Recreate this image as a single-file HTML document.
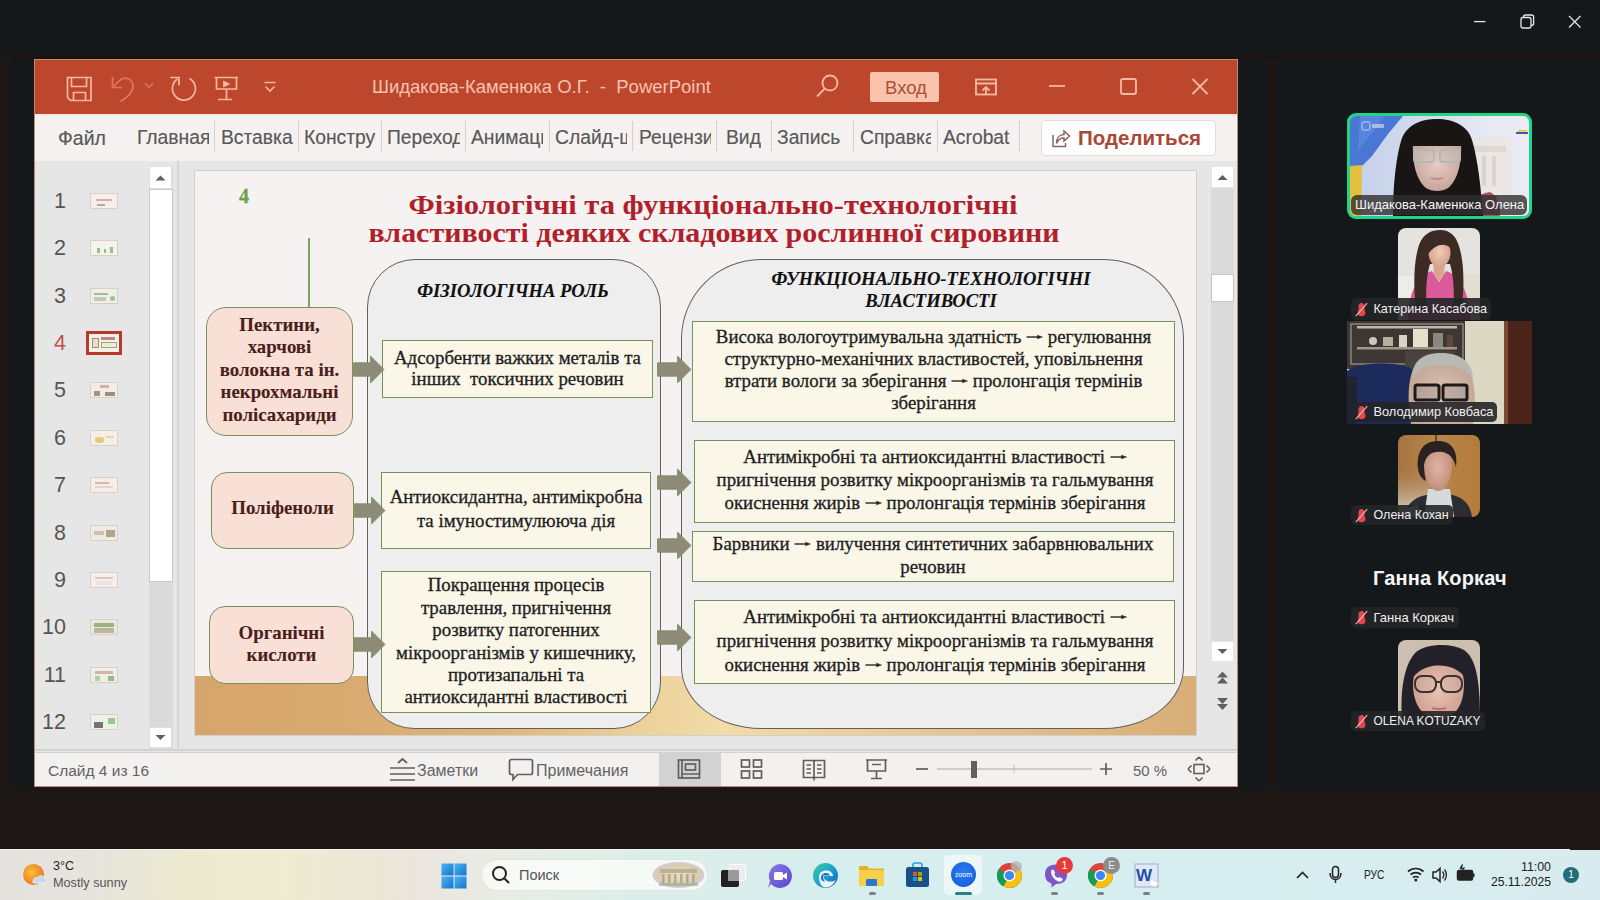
<!DOCTYPE html>
<html><head><meta charset="utf-8">
<style>
*{margin:0;padding:0;box-sizing:border-box}
html,body{width:1600px;height:900px;overflow:hidden;background:#15181b;font-family:"Liberation Sans",sans-serif}
body{position:relative}
.a{position:absolute}
.ser{font-family:"Liberation Serif",serif;-webkit-text-stroke:0.3px currentColor}
.tab{top:126px;height:24px;font-size:19.3px;color:#585858;white-space:nowrap;overflow:hidden;line-height:24px;-webkit-text-stroke:0.15px #585858}
.sep{top:121px;width:1px;height:30px;background:#d3d1d0}
.stxt{font-size:16px;color:#636363;white-space:nowrap;line-height:20px}
.num{left:26px;width:40px;text-align:right;font-size:21.5px;color:#555;line-height:24px}
.th{left:90px;width:28px;height:16px;background:#f4efe9;border:1px solid #d8cfc8}
.th i{opacity:.6}
</style></head><body>
<!-- subtle bands -->
<div class="a" style="left:0;top:51px;width:1600px;height:8px;background:linear-gradient(#15181b,#171613 60%,#1c100c)"></div>
<div class="a" style="left:1267px;top:59px;width:10px;height:728px;background:#1a1716"></div>
<div class="a" style="left:0;top:787px;width:1600px;height:62px;background:#1c1715"></div>
<div class="a" style="left:1238px;top:787px;width:362px;height:2px;background:#15181b"></div>
<div class="a" style="left:0;top:52px;width:11px;height:736px;background:#1b1715"></div>

<!-- window frame -->
<div class="a" style="left:34px;top:59px;width:1204px;height:728px;background:#e6e6e6;border:1px solid #b88a7c"></div>
<!-- title bar -->
<div class="a" style="left:35px;top:60px;width:1202px;height:54px;background:#bc472d"></div>
<!-- tabs bar -->
<div class="a" style="left:35px;top:114px;width:1202px;height:47px;background:#f4f1f0;border-top:2px solid #faeae8"></div>
<!-- status bar -->
<div class="a" style="left:35px;top:749px;width:1202px;height:1.5px;background:#d2d1d1"></div>
<div class="a" style="left:35px;top:752px;width:1202px;height:34px;background:#f3f1f0;border-top:1.5px solid #d2d0d0"></div>


<!-- title bar icons -->
<svg class="a" style="left:60px;top:70px" width="230" height="40" viewBox="60 70 230 40" fill="none" stroke="#f8b7a0" stroke-width="1.7">
  <path d="M67.5 77.5 H91 V100.5 H70.5 L67.5 97.5 Z"/>
  <path d="M71.5 77.5 V86.5 H86.5 V77.5"/>
  <path d="M73.5 100.5 V92.5 H85.5 V100.5"/>
  <g stroke="#e2765c"><path d="M112.5 77 V87.5 H122"/><path d="M112.5 87.5 L119 81 C124 76 133 78 133 86.5 C133 93 127 97 120.5 101.5"/></g>
  <path d="M145 83 L149 87.5 L153 83" stroke-width="1.4" stroke="#e2765c"/>
  <path d="M177.5 79 A11.5 11.5 0 1 0 189.5 78.5"/>
  <path d="M170.5 77.5 H179 V85.5"/>
  <path d="M214.5 77.5 H238 M216.5 77.5 V89 H236.5 V77.5 M226.5 89 V99 M218 99.5 H232"/>
  <path d="M223.5 81 L229.5 84 L223.5 87 Z" fill="#f8b7a0" stroke-width="0.8"/>
  <path d="M264.5 82.5 H275.5 M265.5 86.5 L270 91 L274.5 86.5" stroke-width="1.6"/>
</svg>
<div class="a" style="left:372px;top:75.5px;font-size:18.5px;color:#f8c2ae;white-space:nowrap;line-height:22px">Шидакова-Каменюка О.Г. &nbsp;- &nbsp;PowerPoint</div>
<svg class="a" style="left:800px;top:65px" width="420" height="45" viewBox="800 65 420 45" fill="none" stroke="#f6b9a3" stroke-width="1.8">
  <circle cx="830" cy="83" r="7.5"/><path d="M824.8 88.5 L817 96.5"/>
  <rect x="976" y="79.5" width="20" height="15"/><path d="M976 83.5 H996 M986 94 V87.5 M982.5 90.5 L986 87 L989.5 90.5"/>
  <path d="M1049 86 H1065"/>
  <rect x="1121" y="79" width="15" height="15" rx="2"/>
  <path d="M1192.5 79 L1207.5 94 M1207.5 79 L1192.5 94"/>
</svg>
<div class="a" style="left:870px;top:72px;width:69px;height:30px;background:#fac3ab;border-radius:2px"></div>
<div class="a" style="left:885px;top:76.5px;font-size:18.5px;color:#a9503c;line-height:22px">Вход</div>

<!-- tabs -->
<div class="a tab" style="left:58px;font-size:19.5px">Файл</div>
<div class="a tab" style="left:137px;width:72px">Главная</div>
<div class="a sep" style="left:214px"></div>
<div class="a tab" style="left:221px;width:73px">Вставка</div>
<div class="a sep" style="left:298px"></div>
<div class="a tab" style="left:304px;width:72px">Конструктор</div>
<div class="a sep" style="left:381px"></div>
<div class="a tab" style="left:387px;width:73px">Переходы</div>
<div class="a sep" style="left:465px"></div>
<div class="a tab" style="left:471px;width:72px">Анимация</div>
<div class="a sep" style="left:549px"></div>
<div class="a tab" style="left:555px;width:72px">Слайд-шоу</div>
<div class="a sep" style="left:632px"></div>
<div class="a tab" style="left:639px;width:72px">Рецензирование</div>
<div class="a sep" style="left:716px"></div>
<div class="a tab" style="left:726px">Вид</div>
<div class="a sep" style="left:771px"></div>
<div class="a tab" style="left:777px">Запись</div>
<div class="a sep" style="left:853px"></div>
<div class="a tab" style="left:860px;width:71px">Справка</div>
<div class="a sep" style="left:937px"></div>
<div class="a tab" style="left:943px;width:72px">Acrobat</div>
<div class="a sep" style="left:1019px"></div>
<div class="a" style="left:1041px;top:120px;width:175px;height:36px;background:#fff;border:1px solid #e2dedc;border-radius:4px"></div>
<svg class="a" style="left:1048px;top:124px" width="26" height="28" viewBox="0 0 26 28" fill="none" stroke="#8a6660" stroke-width="1.5">
  <path d="M5 11 V22.5 H17.5 V19"/><path d="M8.5 19.5 C8.5 14 11.5 10.5 16 10.5 V7 L21.5 12 L16 17 V14 C12.5 14 10 16 8.5 19.5 Z"/>
</svg>
<div class="a" style="left:1078px;top:126px;font-size:20.5px;font-weight:bold;color:#ab4735;line-height:24px;white-space:nowrap">Поделиться</div>

<div class="a num" style="top:188.8px;color:#555">1</div>
<div class="a th" style="top:192.8px;background:linear-gradient(#f6eeea,#f6eeea)"><i style="position:absolute;left:5px;top:5px;width:16px;height:2px;background:#c9847a"></i><i style="position:absolute;left:6px;top:10px;width:8px;height:2px;background:#8c7a6a"></i></div>
<div class="a num" style="top:236.2px;color:#555">2</div>
<div class="a th" style="top:240.2px;background:linear-gradient(#f5f2ea,#f5f2ea)"><i style="position:absolute;left:6px;top:7px;width:3px;height:5px;background:#5aa048"></i><i style="position:absolute;left:13px;top:8px;width:2px;height:4px;background:#5aa048"></i><i style="position:absolute;left:19px;top:6px;width:3px;height:6px;background:#5aa048"></i></div>
<div class="a num" style="top:283.6px;color:#555">3</div>
<div class="a th" style="top:287.6px;background:linear-gradient(#eef0e6,#eef0e6)"><i style="position:absolute;left:3px;top:4px;width:14px;height:2px;background:#8b8b7a"></i><i style="position:absolute;left:3px;top:8px;width:12px;height:4px;background:#9fb48e"></i><i style="position:absolute;left:19px;top:7px;width:5px;height:5px;background:#5ab04a;border-radius:50%"></i></div>
<div class="a num" style="top:331.0px;color:#c0504d">4</div>
<div class="a" style="left:86px;top:331px;width:36px;height:24px;border:3px solid #b83b2a;background:#f4f0e8"><i style="position:absolute;left:3px;top:4px;width:7px;height:10px;background:#f3d8cc;border:1px solid #8a9a6a"></i><i style="position:absolute;left:12px;top:3px;width:14px;height:3px;background:#b88"></i><i style="position:absolute;left:12px;top:8px;width:16px;height:6px;background:#f0ead8;border:1px solid #9aa87a"></i></div>
<div class="a num" style="top:378.4px;color:#555">5</div>
<div class="a th" style="top:382.4px;background:linear-gradient(#f2eee6,#f2eee6)"><i style="position:absolute;left:9px;top:2px;width:9px;height:3px;background:#c08080"></i><i style="position:absolute;left:3px;top:8px;width:6px;height:5px;background:#6a5a4a"></i><i style="position:absolute;left:14px;top:9px;width:10px;height:4px;background:#5a5040"></i></div>
<div class="a num" style="top:425.8px;color:#555">6</div>
<div class="a th" style="top:429.8px;background:linear-gradient(#f6f0e4,#f6f0e4)"><i style="position:absolute;left:4px;top:6px;width:9px;height:6px;background:#d8b03a;border-radius:40%"></i><i style="position:absolute;left:15px;top:5px;width:8px;height:2px;background:#c9c3b8"></i></div>
<div class="a num" style="top:473.2px;color:#555">7</div>
<div class="a th" style="top:477.2px;background:linear-gradient(#f6ede8,#f6ede8)"><i style="position:absolute;left:4px;top:4px;width:14px;height:2px;background:#d08a8a"></i><i style="position:absolute;left:4px;top:8px;width:18px;height:2px;background:#cfc8c0"></i></div>
<div class="a num" style="top:520.6px;color:#555">8</div>
<div class="a th" style="top:524.6px;background:linear-gradient(#eeeae4,#eeeae4)"><i style="position:absolute;left:3px;top:5px;width:10px;height:4px;background:#b0a89a"></i><i style="position:absolute;left:15px;top:4px;width:9px;height:7px;background:#8a7050"></i></div>
<div class="a num" style="top:568.0px;color:#555">9</div>
<div class="a th" style="top:572.0px;background:linear-gradient(#f6eeea,#f6eeea)"><i style="position:absolute;left:4px;top:4px;width:18px;height:2px;background:#d3a8a8"></i><i style="position:absolute;left:5px;top:8px;width:16px;height:4px;background:#e6dcd8"></i></div>
<div class="a num" style="top:615.4px;color:#555">10</div>
<div class="a th" style="top:619.4px;background:linear-gradient(#e8eadc,#e8eadc)"><i style="position:absolute;left:3px;top:3px;width:20px;height:4px;background:#6a8a4a"></i><i style="position:absolute;left:3px;top:8px;width:20px;height:5px;background:#a09070"></i></div>
<div class="a num" style="top:662.8px;color:#555">11</div>
<div class="a th" style="top:666.8px;background:linear-gradient(#eef0e4,#eef0e4)"><i style="position:absolute;left:4px;top:3px;width:18px;height:3px;background:#c08a8a"></i><i style="position:absolute;left:4px;top:8px;width:5px;height:5px;background:#90b080"></i><i style="position:absolute;left:17px;top:8px;width:6px;height:5px;background:#5a9a5a"></i></div>
<div class="a num" style="top:710.2px;color:#555">12</div>
<div class="a th" style="top:714.2px;background:linear-gradient(#eef0ea,#eef0ea)"><i style="position:absolute;left:3px;top:7px;width:9px;height:6px;background:#222"></i><i style="position:absolute;left:17px;top:3px;width:7px;height:6px;background:#5ab04a"></i></div>
<!-- left panel scrollbar -->
<div class="a" style="left:149px;top:166px;width:24px;height:583px;background:#dadada"></div>
<div class="a" style="left:149px;top:166px;width:23px;height:23px;background:#fff;border:1px solid #e0e0e0"></div>
<svg class="a" style="left:149px;top:166px" width="23" height="23"><path d="M6.5 14.5 L11.5 9.5 L16.5 14.5 Z" fill="#606060"/></svg>
<div class="a" style="left:149px;top:189px;width:24px;height:393px;background:#fff;border:1px solid #c8c8c8"></div>
<div class="a" style="left:149px;top:727px;width:23px;height:21px;background:#fff;border:1px solid #e0e0e0"></div>
<svg class="a" style="left:149px;top:727px" width="23" height="21"><path d="M6.5 8 L11.5 13 L16.5 8 Z" fill="#606060"/></svg>
<div class="a" style="left:177px;top:161px;width:2px;height:587px;background:#d6d6d6"></div>
<!-- slide shadow + slide -->
<div class="a" style="left:194px;top:170px;width:1003px;height:566px;background:#d0d0d0"></div>
<div id="slide" class="a" style="left:195px;top:171px;width:1001px;height:564px;background:#f5f2f1;overflow:hidden"></div>
<!--SLIDE-->
<div class="a" style="left:195px;top:676px;width:1001px;height:59px;background:linear-gradient(90deg,#d5a56b 0%,#d9aa70 15%,#dfb47a 30%,#edd29a 45%,#f2dcaa 53%,#e9ca98 70%,#dfb882 88%,#d9ae78 100%)"></div>
<div class="a ser" style="left:239px;top:184px;font-size:20px;font-weight:bold;color:#6aa24c;line-height:24px">4</div>
<div class="a ser" style="left:263.0px;top:189.7px;width:900px;font-size:27px;line-height:30px;color:#b01f2c;text-align:center;white-space:nowrap;font-weight:bold;-webkit-text-stroke:0.1px currentColor;transform:scaleX(1.13);-webkit-text-stroke:0;">Фізіологічні та функціонально-технологічні</div>
<div class="a ser" style="left:264.0px;top:217.9px;width:900px;font-size:27px;line-height:30px;color:#b01f2c;text-align:center;white-space:nowrap;font-weight:bold;-webkit-text-stroke:0.1px currentColor;transform:scaleX(1.11);-webkit-text-stroke:0;">властивості деяких складових рослинної сировини</div>
<div class="a" style="left:308px;top:238px;width:2px;height:70px;background:#7aa65a"></div>
<div class="a" style="left:367px;top:259px;width:294px;height:470px;background:#efeeef;border:1.8px solid #625f58;border-radius:48px 48px 47px 47px"></div>
<div class="a" style="left:681px;top:259px;width:503px;height:470px;background:#efeeef;border:1.8px solid #625f58;border-radius:80px 80px 80px 80px / 80px 80px 62px 62px"></div>
<div class="a ser" style="left:213.0px;top:279.5px;width:600px;font-size:18.6px;line-height:22.4px;color:#111;text-align:center;white-space:nowrap;font-weight:bold;-webkit-text-stroke:0.1px currentColor;font-style:italic;">ФІЗІОЛОГІЧНА РОЛЬ</div>
<div class="a ser" style="left:631.0px;top:267.9px;width:600px;font-size:18.6px;line-height:22.3px;color:#111;text-align:center;white-space:nowrap;font-weight:bold;-webkit-text-stroke:0.1px currentColor;font-style:italic;">ФУНКЦІОНАЛЬНО-ТЕХНОЛОГІЧНІ<br>ВЛАСТИВОСТІ</div>
<div class="a" style="left:206px;top:307px;width:147px;height:129px;background:#f8e0d6;border:1.8px solid #77915a;border-radius:20px"></div>
<div class="a" style="left:211px;top:472px;width:143px;height:77px;background:#f8e0d6;border:1.8px solid #77915a;border-radius:16px"></div>
<div class="a" style="left:209px;top:606px;width:145px;height:78px;background:#f8e0d6;border:1.8px solid #77915a;border-radius:16px"></div>
<div class="a ser" style="left:-20.5px;top:313.9px;width:600px;font-size:18.85px;line-height:22.5px;color:#4a1e1b;text-align:center;white-space:nowrap;font-weight:bold;-webkit-text-stroke:0.1px currentColor;">Пектини,<br>харчові<br>волокна та ін.<br>некрохмальні<br>полісахариди</div>
<div class="a ser" style="left:-17.5px;top:496.9px;width:600px;font-size:18.85px;line-height:22.4px;color:#4a1e1b;text-align:center;white-space:nowrap;font-weight:bold;-webkit-text-stroke:0.1px currentColor;">Поліфеноли</div>
<div class="a ser" style="left:-18.5px;top:622.0px;width:600px;font-size:18.85px;line-height:22.1px;color:#4a1e1b;text-align:center;white-space:nowrap;font-weight:bold;-webkit-text-stroke:0.1px currentColor;">Органічні<br>кислоти</div>
<div class="a" style="left:382px;top:340px;width:271px;height:58px;background:#faf6e8;border:1.8px solid #77915a;border-radius:0px"></div>
<div class="a" style="left:381px;top:472px;width:270px;height:77px;background:#faf6e8;border:1.8px solid #77915a;border-radius:0px"></div>
<div class="a" style="left:381px;top:571px;width:270px;height:142px;background:#faf6e8;border:1.8px solid #77915a;border-radius:0px"></div>
<div class="a ser" style="left:217.5px;top:346.5px;width:600px;font-size:18.85px;line-height:21.9px;color:#1e1e1e;text-align:center;white-space:nowrap;">Адсорбенти важких металів та<br>інших &nbsp;токсичних речовин</div>
<div class="a ser" style="left:216.0px;top:485.0px;width:600px;font-size:18.85px;line-height:24.3px;color:#1e1e1e;text-align:center;white-space:nowrap;">Антиоксидантна, антимікробна<br>та імуностимулююча дія</div>
<div class="a ser" style="left:216.0px;top:574.4px;width:600px;font-size:18.85px;line-height:22.4px;color:#1e1e1e;text-align:center;white-space:nowrap;">Покращення процесів<br>травлення, пригнічення<br>розвитку патогенних<br>мікроорганізмів у кишечнику,<br>протизапальні та<br>антиоксидантні властивості</div>
<div class="a" style="left:692px;top:321px;width:483px;height:101px;background:#faf6e8;border:1.8px solid #77915a;border-radius:0px"></div>
<div class="a" style="left:694px;top:440px;width:481px;height:83px;background:#faf6e8;border:1.8px solid #77915a;border-radius:0px"></div>
<div class="a" style="left:692px;top:531px;width:482px;height:51px;background:#faf6e8;border:1.8px solid #77915a;border-radius:0px"></div>
<div class="a" style="left:694px;top:600px;width:481px;height:84px;background:#faf6e8;border:1.8px solid #77915a;border-radius:0px"></div>
<div class="a ser" style="left:633.5px;top:325.8px;width:600px;font-size:18.85px;line-height:22.2px;color:#1e1e1e;text-align:center;white-space:nowrap;">Висока вологоутримувальна здатність <svg width="17" height="8" style="vertical-align:1.8px" fill="none" stroke="#262626"><path d="M0.5 4 H14" stroke-width="1.4"/><path d="M11.5 2.2 L16.5 4 L11.5 5.8 Z" fill="#262626" stroke-width="0.5"/></svg> регулювання<br>структурно-механічних властивостей, уповільнення<br>втрати вологи за зберігання <svg width="17" height="8" style="vertical-align:1.8px" fill="none" stroke="#262626"><path d="M0.5 4 H14" stroke-width="1.4"/><path d="M11.5 2.2 L16.5 4 L11.5 5.8 Z" fill="#262626" stroke-width="0.5"/></svg> пролонгація термінів<br>зберігання</div>
<div class="a ser" style="left:635.0px;top:446.2px;width:600px;font-size:18.85px;line-height:22.8px;color:#1e1e1e;text-align:center;white-space:nowrap;">Антимікробні та антиоксидантні властивості <svg width="17" height="8" style="vertical-align:1.8px" fill="none" stroke="#262626"><path d="M0.5 4 H14" stroke-width="1.4"/><path d="M11.5 2.2 L16.5 4 L11.5 5.8 Z" fill="#262626" stroke-width="0.5"/></svg><br>пригнічення розвитку мікроорганізмів та гальмування<br>окиснення жирів <svg width="17" height="8" style="vertical-align:1.8px" fill="none" stroke="#262626"><path d="M0.5 4 H14" stroke-width="1.4"/><path d="M11.5 2.2 L16.5 4 L11.5 5.8 Z" fill="#262626" stroke-width="0.5"/></svg> пролонгація термінів зберігання</div>
<div class="a ser" style="left:633.0px;top:533.2px;width:600px;font-size:18.85px;line-height:22.4px;color:#1e1e1e;text-align:center;white-space:nowrap;">Барвники <svg width="17" height="8" style="vertical-align:1.8px" fill="none" stroke="#262626"><path d="M0.5 4 H14" stroke-width="1.4"/><path d="M11.5 2.2 L16.5 4 L11.5 5.8 Z" fill="#262626" stroke-width="0.5"/></svg> вилучення синтетичних забарвнювальних<br>речовин</div>
<div class="a ser" style="left:635.0px;top:604.6px;width:600px;font-size:18.85px;line-height:24.2px;color:#1e1e1e;text-align:center;white-space:nowrap;">Антимікробні та антиоксидантні властивості <svg width="17" height="8" style="vertical-align:1.8px" fill="none" stroke="#262626"><path d="M0.5 4 H14" stroke-width="1.4"/><path d="M11.5 2.2 L16.5 4 L11.5 5.8 Z" fill="#262626" stroke-width="0.5"/></svg><br>пригнічення розвитку мікроорганізмів та гальмування<br>окиснення жирів <svg width="17" height="8" style="vertical-align:1.8px" fill="none" stroke="#262626"><path d="M0.5 4 H14" stroke-width="1.4"/><path d="M11.5 2.2 L16.5 4 L11.5 5.8 Z" fill="#262626" stroke-width="0.5"/></svg> пролонгація термінів зберігання</div>
<svg class="a" style="left:353px;top:354.8px" width="32" height="29"><path d="M0.5 7.75 H17.5 V1 L31 14.5 L17.5 28 V21.25 H0.5 Z" fill="#8d8a77" stroke="#76905a" stroke-width="0.8"/></svg>
<svg class="a" style="left:354px;top:495.5px" width="32" height="29"><path d="M0.5 7.75 H17.5 V1 L31 14.5 L17.5 28 V21.25 H0.5 Z" fill="#8d8a77" stroke="#76905a" stroke-width="0.8"/></svg>
<svg class="a" style="left:353px;top:629.5px" width="33" height="29"><path d="M0.5 7.75 H18.5 V1 L32 14.5 L18.5 28 V21.25 H0.5 Z" fill="#8d8a77" stroke="#76905a" stroke-width="0.8"/></svg>
<svg class="a" style="left:657px;top:354.5px" width="35" height="29"><path d="M0.5 7.75 H20.5 V1 L34 14.5 L20.5 28 V21.25 H0.5 Z" fill="#8d8a77" stroke="#76905a" stroke-width="0.8"/></svg>
<svg class="a" style="left:657px;top:467.5px" width="35" height="29"><path d="M0.5 7.75 H20.5 V1 L34 14.5 L20.5 28 V21.25 H0.5 Z" fill="#8d8a77" stroke="#76905a" stroke-width="0.8"/></svg>
<svg class="a" style="left:657px;top:530.5px" width="35" height="29"><path d="M0.5 7.75 H20.5 V1 L34 14.5 L20.5 28 V21.25 H0.5 Z" fill="#8d8a77" stroke="#76905a" stroke-width="0.8"/></svg>
<svg class="a" style="left:657px;top:622.5px" width="35" height="29"><path d="M0.5 7.75 H20.5 V1 L34 14.5 L20.5 28 V21.25 H0.5 Z" fill="#8d8a77" stroke="#76905a" stroke-width="0.8"/></svg>
<!--/SLIDE-->
<!-- editor scrollbar -->
<div class="a" style="left:1211px;top:166px;width:23px;height:496px;background:#dadada"></div>
<div class="a" style="left:1211px;top:166px;width:23px;height:22px;background:#fff;border:1px solid #e6e6e6"></div>
<svg class="a" style="left:1211px;top:166px" width="23" height="22"><path d="M6.5 14 L11.5 9 L16.5 14 Z" fill="#606060"/></svg>
<div class="a" style="left:1211px;top:274px;width:23px;height:28px;background:#fff;border:1px solid #c4c4c4"></div>
<div class="a" style="left:1211px;top:641px;width:23px;height:21px;background:#fff;border:1px solid #e6e6e6"></div>
<svg class="a" style="left:1211px;top:641px" width="23" height="21"><path d="M6.5 8 L11.5 13 L16.5 8 Z" fill="#606060"/></svg>
<svg class="a" style="left:1211px;top:668px" width="23" height="48" fill="#606060"><path d="M6 9.5 L11.5 3.5 L17 9.5 Z M6 15.5 L11.5 9.5 L17 15.5 Z"/><path d="M6 30 L11.5 36 L17 30 Z M6 36 L11.5 42 L17 36 Z"/></svg>
<!-- status bar -->
<div class="a stxt" style="left:48px;top:761px;font-size:15.5px">Слайд 4 из 16</div>
<svg class="a" style="left:385px;top:755px" width="40" height="30" fill="none" stroke="#5f5f5f" stroke-width="1.7"><path d="M5 13 H30 M5 19 H30 M5 25 H30"/><path d="M13 8 L17.5 4 L22 8"/></svg>
<div class="a stxt" style="left:417px;top:761px">Заметки</div>
<svg class="a" style="left:505px;top:755px" width="30" height="30" fill="none" stroke="#5f5f5f" stroke-width="1.7"><path d="M6.5 4.5 H25.5 Q27.5 4.5 27.5 6.5 V17.5 Q27.5 19.5 25.5 19.5 H12.5 L8 24.5 V19.5 H6.5 Q4.5 19.5 4.5 17.5 V6.5 Q4.5 4.5 6.5 4.5 Z"/></svg>
<div class="a stxt" style="left:536px;top:761px">Примечания</div>
<div class="a" style="left:659px;top:752px;width:62px;height:34px;background:#d2d2d2"></div>
<svg class="a" style="left:670px;top:752px" width="560" height="34" fill="none" stroke="#5f5f5f" stroke-width="1.7">
  <!-- normal -->
  <rect x="8.5" y="8" width="21" height="18"/><path d="M12 8 V26 M12 22 H29.5"/><rect x="15.5" y="12" width="10" height="6"/>
  <!-- sorter -->
  <rect x="71.5" y="8" width="8" height="7"/><rect x="83.5" y="8" width="8" height="7"/><rect x="71.5" y="19" width="8" height="7"/><rect x="83.5" y="19" width="8" height="7"/>
  <!-- reading -->
  <path d="M133.5 8.5 H143.5 L144 10 L144.5 8.5 H154.5 V25.5 H144.5 L144 27 L143.5 25.5 H133.5 Z M144 10 V25"/><path d="M136.5 13 H141 M136.5 17 H141 M136.5 21 H141 M147 13 H151.5 M147 17 H151.5 M147 21 H151.5" stroke-width="1.3"/>
  <!-- slideshow -->
  <path d="M196 8 H217 M197.5 8 V19 H215.5 V8 M206.5 19 V26 M201 26.5 H212"/><path d="M202 12.5 H211" stroke-width="1.4"/>
  <!-- zoom -->
  <path d="M246 17 H258"/>
  <path d="M267 17 H422" stroke="#a8a8a8" stroke-width="1"/><path d="M344 13 V21" stroke="#bdbdbd" stroke-width="1"/>
  <rect x="301" y="9" width="6" height="17" fill="#606060" stroke="none"/>
  <path d="M430 17 H442 M436 11 V23"/>
</svg>
<div class="a stxt" style="left:1133px;top:761px;font-size:15px">50 %</div>
<svg class="a" style="left:1185px;top:755px" width="30" height="28" fill="none" stroke="#5f5f5f" stroke-width="1.6"><rect x="9" y="9.5" width="10" height="9"/><path d="M14 2 L10.5 5.5 M14 2 L17.5 5.5 M14 26 L10.5 22.5 M14 26 L17.5 22.5 M3 14 L6.5 10.5 M3 14 L6.5 17.5 M25 14 L21.5 10.5 M25 14 L21.5 17.5"/></svg>

<!--RIGHT-->
<svg class="a" style="left:1465px;top:8px" width="125" height="28" fill="none" stroke="#e6e6e6" stroke-width="1.3">
<path d="M9 13.6 H20.5"/>
<rect x="56" y="9.5" width="10" height="10.5" rx="2"/><path d="M58.5 9.5 V9 C58.5 7.8 59.3 7 60.5 7 H66.5 C67.8 7 68.6 7.8 68.6 9 V15.5 C68.6 16.7 67.8 17.5 66.5 17.5 H66"/>
<path d="M104 8 L115.5 19.5 M115.5 8 L104 19.5"/>
</svg>
<div class="a" style="left:1347px;top:113px;width:185px;height:106px;border-radius:9px;background:#22d488"></div>
<svg class="a" style="left:1350px;top:116px;border-radius:6px" width="179" height="100" viewBox="0 0 179 100">
<defs>
<linearGradient id="bg1" x1="0" y1="0" x2="1" y2="0"><stop offset="0" stop-color="#c4d0ea"/><stop offset="0.45" stop-color="#d4dcef"/><stop offset="0.75" stop-color="#e6e8f3"/><stop offset="1" stop-color="#ecebf4"/></linearGradient>
<radialGradient id="face1" cx="50%" cy="45%" r="55%"><stop offset="0" stop-color="#e6cdc6"/><stop offset="1" stop-color="#c9a49a"/></radialGradient>
</defs>
<rect width="179" height="100" fill="url(#bg1)"/>
<path d="M0 0 H53 L38 18 L22 40 L12 50 L0 52 Z" fill="#4a76d4"/>
<path d="M10 0 L35 0 L20 20 L8 35 Z" fill="#5d8ae0" opacity=".7"/>
<path d="M0 50 L12 49 L11 100 H0 Z" fill="#e3c03e"/>
<g opacity=".55"><rect x="114" y="22" width="48" height="60" fill="#efe6d8"/><rect x="120" y="30" width="36" height="6" fill="#d8ccb8"/><rect x="122" y="40" width="4" height="30" fill="#cfc3ae"/><rect x="132" y="40" width="4" height="30" fill="#cfc3ae"/><rect x="142" y="40" width="4" height="30" fill="#cfc3ae"/></g>
<rect x="166" y="16" width="12" height="2" fill="#3a58b0"/><rect x="168" y="14" width="9" height="1.5" fill="#e8c030"/>
<rect x="12" y="6" width="8" height="8" rx="1.5" fill="none" stroke="#e4eaf6" stroke-width="1" opacity=".8"/>
<rect x="22" y="8" width="12" height="4" fill="#dfe6f4" opacity=".6"/>
<path d="M118 100 C118 86 126 78 140 76 C148 80 150 90 150 100 Z" fill="#8a2838" opacity=".75"/>
<path d="M43 100 C43 70 46 40 52 22 C58 8 72 3 87 3 C104 3 118 10 122 24 C128 44 131 72 133 100 Z" fill="#1a1515"/>
<path d="M63 26 H111 C112 46 108 64 98 72 C92 76 82 76 76 72 C66 64 62 46 63 26 Z" fill="url(#face1)"/>
<path d="M58 30 C60 14 70 8 87 8 C104 8 114 14 116 30 Z" fill="#1a1515"/>
<rect x="64" y="34" width="20" height="12" rx="3" fill="rgba(190,200,190,.35)" stroke="#b4b8b6" stroke-width="2"/>
<rect x="90" y="34" width="20" height="12" rx="3" fill="rgba(190,200,190,.35)" stroke="#b4b8b6" stroke-width="2"/>
<path d="M81 62 Q87 64 93 62" stroke="#c09090" stroke-width="2" fill="none"/>
</svg>
<div class="a" style="left:1351px;top:195px;width:176px;height:20px;background:rgba(48,46,48,0.8);border-radius:6px"></div>
<div class="a" style="left:1355px;top:195px;height:20px;line-height:20px;font-size:13px;color:#f4f4f4;white-space:nowrap">Шидакова-Каменюка Олена</div>
<svg class="a" style="left:1398px;top:228px;border-radius:8px 8px 0 0" width="82" height="92" viewBox="0 0 82 92">
<defs><radialGradient id="fk" cx="50%" cy="45%" r="60%"><stop offset="0" stop-color="#f0cdb8"/><stop offset="1" stop-color="#d29c86"/></radialGradient></defs>
<rect width="82" height="92" fill="#e5e3df"/>
<rect x="0" y="48" width="18" height="44" fill="#eeece6"/><rect x="66" y="46" width="16" height="46" fill="#e4ded0"/>
<path d="M10 92 C10 62 22 46 34 43 L41 54 L48 43 C60 46 72 62 72 92 Z" fill="#db5a9c"/>
<path d="M18 82 C15 56 16 32 21 17 C25 6 33 2 42 2 C52 2 58 8 61 18 C66 34 67 60 63 84 L55 84 C57 62 55 46 52 36 H32 C29 46 27 62 29 84 Z" fill="#3c2a25"/>
<path d="M35 34 H47 L46 46 L41 53 L36 46 Z" fill="#d8a48e"/>
<ellipse cx="41.5" cy="25" rx="11" ry="14" fill="url(#fk)"/>
<path d="M28 26 C28 10 34 5 42 5 C50 5 56 10 56 24 C50 15 40 13 30 26 Z" fill="#3c2a25"/>
</svg>
<div class="a" style="left:1351px;top:298px;width:140px;height:22px;background:rgba(36,37,39,0.9);border-radius:5px"></div><svg class="a" style="left:1353.5px;top:301.5px" width="16" height="15" viewBox="0 0 16 15"><path d="M7.5 1 C9.5 1 10.5 2.5 10.5 4.5 V7 C10.5 8.5 11.5 9.5 11.5 11 C11.5 13 10 14.2 8 14.2 H7 C5 14.2 3.8 13 3.8 11 C3.8 9.5 4.5 8.5 4.5 7 V4.5 C4.5 2.5 5.5 1 7.5 1 Z" fill="#e0474e"/><path d="M1.8 14.2 L13.2 1.2" stroke="#f5b0b0" stroke-width="1.2"/></svg><div class="a" style="left:1373.5px;top:298px;height:22px;line-height:22px;font-size:12.6px;color:#f0f0f0;white-space:nowrap">Катерина Касабова</div>
<svg class="a" style="left:1347px;top:321px" width="185" height="103" viewBox="0 0 185 103">
<defs><radialGradient id="fv" cx="50%" cy="60%" r="60%"><stop offset="0" stop-color="#dcc4b4"/><stop offset="1" stop-color="#bfa392"/></radialGradient></defs>
<rect width="185" height="103" fill="#d9d5c2"/>
<rect x="0" y="0" width="118" height="48" fill="#3e3632"/>
<rect x="4" y="3" width="112" height="40" fill="none" stroke="#9a9a96" stroke-width="1.2"/>
<rect x="10" y="5" width="100" height="2.5" fill="#bdb8ac"/><rect x="10" y="26" width="100" height="2.5" fill="#9e988c"/>
<circle cx="26" cy="20" r="4" fill="#c8c8c4"/><rect x="36" y="16" width="10" height="9" fill="#b8aea0"/><rect x="52" y="14" width="8" height="12" fill="#d8d4c8"/>
<rect x="66" y="8" width="15" height="18" fill="#e6e0cc"/><rect x="86" y="12" width="10" height="14" fill="#8a8680"/><rect x="100" y="14" width="6" height="12" fill="#5a4a40"/>
<rect x="58" y="30" width="50" height="30" fill="#4a423e"/>
<rect x="118" y="0" width="42" height="103" fill="#dcd8c4"/>
<rect x="157" y="0" width="28" height="103" fill="#4a2418"/><rect x="157" y="0" width="4" height="103" fill="#7a4a30"/>
<path d="M0 103 V50 C10 42 40 40 62 46 C72 52 74 80 72 103 Z" fill="#1d2a5c"/>
<rect x="0" y="56" width="10" height="47" fill="#1f2430"/>
<path d="M64 103 C60 80 60 50 72 40 C82 32 104 32 116 40 C128 50 130 80 126 103 Z" fill="url(#fv)"/>
<path d="M66 58 C64 42 74 32 94 32 C114 32 126 42 126 58 C120 48 110 44 94 44 C80 44 70 48 66 58 Z" fill="#b8b8b4"/>
<rect x="68" y="64" width="24" height="15" rx="2" fill="rgba(120,120,130,.25)" stroke="#1e1a1a" stroke-width="3"/>
<rect x="96" y="64" width="24" height="15" rx="2" fill="rgba(120,120,130,.25)" stroke="#1e1a1a" stroke-width="3"/>
</svg>
<div class="a" style="left:1351px;top:402px;width:146px;height:20px;background:rgba(36,37,39,0.9);border-radius:5px"></div><svg class="a" style="left:1353.5px;top:404.5px" width="16" height="15" viewBox="0 0 16 15"><path d="M7.5 1 C9.5 1 10.5 2.5 10.5 4.5 V7 C10.5 8.5 11.5 9.5 11.5 11 C11.5 13 10 14.2 8 14.2 H7 C5 14.2 3.8 13 3.8 11 C3.8 9.5 4.5 8.5 4.5 7 V4.5 C4.5 2.5 5.5 1 7.5 1 Z" fill="#e0474e"/><path d="M1.8 14.2 L13.2 1.2" stroke="#f5b0b0" stroke-width="1.2"/></svg><div class="a" style="left:1373.5px;top:402px;height:20px;line-height:20px;font-size:12.8px;color:#f0f0f0;white-space:nowrap">Володимир Ковбаса</div>
<svg class="a" style="left:1398px;top:435px;border-radius:8px" width="82" height="82" viewBox="0 0 82 82">
<defs><linearGradient id="wk" x1="0" y1="0" x2="1" y2="0"><stop offset="0" stop-color="#a87440"/><stop offset=".5" stop-color="#b88548"/><stop offset="1" stop-color="#b47a3c"/></linearGradient>
<radialGradient id="fk2" cx="50%" cy="45%" r="60%"><stop offset="0" stop-color="#e0b4a2"/><stop offset="1" stop-color="#bf8a78"/></radialGradient>
<linearGradient id="lk" x1="0" y1="0" x2="0" y2="1"><stop offset="0" stop-color="#a08060" stop-opacity="0"/><stop offset="1" stop-color="#e6e2da"/></linearGradient></defs>
<rect width="82" height="82" fill="url(#wk)"/>
<rect x="0" y="30" width="32" height="52" fill="url(#lk)"/>
<rect x="37" y="0" width="2" height="10" fill="#6a4424"/>
<path d="M6 82 C8 68 18 62 28 60 H54 C64 62 72 68 74 82 Z" fill="#2c2c32"/>
<path d="M2 82 C6 74 14 70 20 70 L24 82 Z" fill="#e4e6e6" opacity=".85"/>
<path d="M30 54 H52 L56 82 H26 Z" fill="#d6dadc"/>
<path d="M26 28 C26 18 31 12 40 12 C49 12 54 18 54 28 C54 44 48 56 40 56 C32 56 26 44 26 28 Z" fill="url(#fk2)"/>
<path d="M20 34 C18 16 26 6 40 6 C54 6 60 16 58 32 C56 24 52 18 44 17 C34 16 28 20 26 30 C26 38 28 46 28 46 C24 44 21 40 20 34 Z" fill="#2a2220"/>
</svg>
<div class="a" style="left:1351px;top:505px;width:102px;height:20px;background:rgba(36,37,39,0.9);border-radius:5px"></div><svg class="a" style="left:1353.5px;top:507.5px" width="16" height="15" viewBox="0 0 16 15"><path d="M7.5 1 C9.5 1 10.5 2.5 10.5 4.5 V7 C10.5 8.5 11.5 9.5 11.5 11 C11.5 13 10 14.2 8 14.2 H7 C5 14.2 3.8 13 3.8 11 C3.8 9.5 4.5 8.5 4.5 7 V4.5 C4.5 2.5 5.5 1 7.5 1 Z" fill="#e0474e"/><path d="M1.8 14.2 L13.2 1.2" stroke="#f5b0b0" stroke-width="1.2"/></svg><div class="a" style="left:1373.5px;top:505px;height:20px;line-height:20px;font-size:12.5px;color:#f0f0f0;white-space:nowrap">Олена Кохан</div>
<div class="a" style="left:1373px;top:566px;font-size:20px;font-weight:bold;color:#f4f4f4;line-height:24px;white-space:nowrap;letter-spacing:0.15px">Ганна Коркач</div>
<div class="a" style="left:1351px;top:607px;width:108px;height:21px;background:rgba(36,37,39,0.9);border-radius:5px"></div><svg class="a" style="left:1353.5px;top:610.0px" width="16" height="15" viewBox="0 0 16 15"><path d="M7.5 1 C9.5 1 10.5 2.5 10.5 4.5 V7 C10.5 8.5 11.5 9.5 11.5 11 C11.5 13 10 14.2 8 14.2 H7 C5 14.2 3.8 13 3.8 11 C3.8 9.5 4.5 8.5 4.5 7 V4.5 C4.5 2.5 5.5 1 7.5 1 Z" fill="#e0474e"/><path d="M1.8 14.2 L13.2 1.2" stroke="#f5b0b0" stroke-width="1.2"/></svg><div class="a" style="left:1373.5px;top:607px;height:21px;line-height:21px;font-size:13px;color:#f0f0f0;white-space:nowrap">Ганна Коркач</div>
<svg class="a" style="left:1398px;top:640px;border-radius:8px 8px 0 0" width="82" height="80" viewBox="0 0 82 80">
<defs><radialGradient id="fo" cx="50%" cy="50%" r="60%"><stop offset="0" stop-color="#e8c4b4"/><stop offset="1" stop-color="#cc9a8a"/></radialGradient></defs>
<rect width="82" height="80" fill="#cdbfb0"/>
<path d="M4 80 C2 50 6 24 18 12 C28 4 52 2 66 10 C78 18 82 40 82 80 Z" fill="#22212a"/>
<path d="M15 44 C15 28 25 20 41 20 C57 20 66 28 66 44 C66 64 58 78 41 80 C24 78 15 64 15 44 Z" fill="url(#fo)"/>
<path d="M12 42 C14 24 26 14 42 14 C58 14 68 24 68 38 C60 28 48 24 34 26 C24 28 16 34 12 42 Z" fill="#22212a"/>
<rect x="17" y="36" width="21" height="16" rx="7" fill="rgba(190,180,170,.25)" stroke="#3e302c" stroke-width="2"/>
<rect x="43" y="36" width="21" height="16" rx="7" fill="rgba(190,180,170,.25)" stroke="#3e302c" stroke-width="2"/>
<path d="M38 42 H43" stroke="#3e302c" stroke-width="2"/>
<path d="M34 68 Q41 70 48 68" stroke="#c07070" stroke-width="2.2" fill="none"/>
</svg>
<div class="a" style="left:1351px;top:711px;width:134px;height:20px;background:rgba(36,37,39,0.9);border-radius:5px"></div><svg class="a" style="left:1353.5px;top:713.5px" width="16" height="15" viewBox="0 0 16 15"><path d="M7.5 1 C9.5 1 10.5 2.5 10.5 4.5 V7 C10.5 8.5 11.5 9.5 11.5 11 C11.5 13 10 14.2 8 14.2 H7 C5 14.2 3.8 13 3.8 11 C3.8 9.5 4.5 8.5 4.5 7 V4.5 C4.5 2.5 5.5 1 7.5 1 Z" fill="#e0474e"/><path d="M1.8 14.2 L13.2 1.2" stroke="#f5b0b0" stroke-width="1.2"/></svg><div class="a" style="left:1373.5px;top:711px;height:20px;line-height:20px;font-size:11.9px;color:#f0f0f0;white-space:nowrap">OLENA KOTUZAKY</div>
<!--/RIGHT-->
<!--TASK-->
<div class="a" style="left:0;top:849px;width:1600px;height:51px;background:linear-gradient(90deg,#e4e2de 0%,#e6e4dc 6%,#ecebd0 12%,#eeecd0 17%,#ede6d8 24%,#eae6e0 27%,#e8ece4 31%,#dceeea 40%,#d6eeee 52%,#d6eeef 75%,#d8ecf0 100%)"></div>
<div class="a" style="left:0;top:849px;width:1600px;height:1px;background:#f2f2f0;opacity:.8"></div>
<div class="a" style="left:1570px;top:848px;width:30px;height:2px;background:#1c1715"></div>
<svg class="a" style="left:20px;top:860px" width="30" height="30" viewBox="0 0 30 30">
<defs><radialGradient id="sun" cx="40%" cy="40%" r="60%"><stop offset="0" stop-color="#fbbf3a"/><stop offset="1" stop-color="#ee7a1c"/></radialGradient></defs>
<circle cx="13.5" cy="14.5" r="10.5" fill="url(#sun)"/>
<path d="M13 22 C13 18.5 15.5 17 18 17.5 C19 15 23.5 15 24.5 18.5 C27 18.5 27.5 22.5 25 23 H14 C13 23 13 22.5 13 22 Z" fill="#c8d8ec" stroke="#eef3fa" stroke-width="1"/>
</svg>
<div class="a" style="left:53px;top:859px;font-size:12.5px;color:#1e1e1e;line-height:14px;white-space:nowrap">3°C</div>
<div class="a" style="left:53px;top:876px;font-size:12.7px;color:#555;line-height:14px;white-space:nowrap">Mostly sunny</div>
<svg class="a" style="left:441px;top:863px" width="26" height="26" viewBox="0 0 26 26">
<defs><linearGradient id="wl" x1="0" y1="0" x2="1" y2="1"><stop offset="0" stop-color="#49b6f3"/><stop offset="1" stop-color="#1772d2"/></linearGradient></defs>
<rect x="0.5" y="0.5" width="12" height="12" fill="url(#wl)"/><rect x="13.5" y="0.5" width="12" height="12" fill="url(#wl)"/>
<rect x="0.5" y="13.5" width="12" height="12" fill="url(#wl)"/><rect x="13.5" y="13.5" width="12" height="12" fill="url(#wl)"/>
</svg>
<div class="a" style="left:481px;top:859px;width:227px;height:32px;border-radius:16px;background:rgba(250,252,248,0.85);border:1px solid #dfe4e0"></div>
<svg class="a" style="left:490px;top:864px" width="22" height="22" fill="none" stroke="#222" stroke-width="2"><circle cx="9.5" cy="9.5" r="6.5"/><path d="M14.5 14.5 L19 19"/></svg>
<div class="a" style="left:519px;top:866px;font-size:14.5px;color:#555;line-height:18px">Поиск</div>
<svg class="a" style="left:651px;top:861px" width="55" height="28" viewBox="0 0 55 28">
<defs><radialGradient id="sg" cx="50%" cy="50%" r="55%"><stop offset="0" stop-color="#e8e0c4"/><stop offset=".7" stop-color="#d8ccb0"/><stop offset="1" stop-color="#c4b0d8" stop-opacity=".6"/></radialGradient></defs>
<ellipse cx="27.5" cy="14" rx="26" ry="13" fill="url(#sg)"/>
<rect x="9" y="8" width="37" height="4" fill="#b8a888" opacity=".8"/>
<g fill="#a89878" opacity=".7"><rect x="11" y="13" width="2.5" height="9"/><rect x="17" y="13" width="2.5" height="9"/><rect x="23" y="13" width="2.5" height="9"/><rect x="29" y="13" width="2.5" height="9"/><rect x="35" y="13" width="2.5" height="9"/><rect x="41" y="13" width="2.5" height="9"/></g>
<rect x="8" y="22" width="39" height="3" fill="#88a8a0" opacity=".6"/>
</svg>
<div class="a" style="left:729px;top:864px;width:17px;height:17px;background:#ececec;border:1px solid #fff;border-radius:2px"></div>
<div class="a" style="left:721px;top:870px;width:18px;height:17px;background:#222;border-radius:2px"></div>
<div class="a" style="left:728px;top:870px;width:11px;height:11px;background:#9a9a9a"></div>
<svg class="a" style="left:766px;top:862px" width="28" height="28" viewBox="0 0 28 28">
<defs><linearGradient id="tm" x1="0" y1="0" x2="1" y2="1"><stop offset="0" stop-color="#8a7ae8"/><stop offset="1" stop-color="#5a46c8"/></linearGradient></defs>
<path d="M14 2 A12 12 0 1 1 5 22 L2 26 L4 19 A12 12 0 0 1 14 2 Z" fill="url(#tm)"/>
<rect x="8" y="10" width="9" height="8" rx="1.5" fill="#fff"/><path d="M17 13 L21 10.5 V17.5 L17 15 Z" fill="#fff"/>
</svg>
<svg class="a" style="left:812px;top:862px" width="27" height="27" viewBox="0 0 27 27">
<defs><linearGradient id="eg" x1="0" y1="0" x2="1" y2="1"><stop offset="0" stop-color="#3bd38a"/><stop offset="0.5" stop-color="#1ea0d8"/><stop offset="1" stop-color="#1260b0"/></linearGradient></defs>
<circle cx="13.5" cy="13.5" r="12.5" fill="url(#eg)"/>
<path d="M7 15 C7 10 11 8 15 8.5 C19 9 21 11.5 21 14 H11.5 C11.5 17 14 19.5 18 19.5 C20 19.5 22 19 23.5 18 C22 22.5 18 25.5 13.5 25.5 C9 25.5 7 20 7 15 Z" fill="#e8f4fa"/>
<path d="M9 16 C9 12.5 11.5 11 14 11 C16 11 17.5 12 18 13.5 H11 C10.8 15.5 11.5 18 13 19.5 C10.5 19.5 9 18 9 16 Z" fill="#1a70c0"/>
</svg>
<svg class="a" style="left:858px;top:863px" width="27" height="25" viewBox="0 0 27 25">
<path d="M1 3 H9 L11 5.5 H26 V23 H1 Z" fill="#e8b020"/><rect x="1" y="7" width="25" height="16" fill="#f6d04a"/>
<rect x="8" y="16" width="11" height="7" rx="1" fill="#2a78d0"/>
</svg>
<div class="a" style="left:869px;top:892px;width:7px;height:3px;border-radius:2px;background:#7a8088"></div>
<svg class="a" style="left:905px;top:862px" width="25" height="26" viewBox="0 0 25 26">
<path d="M8 5 V3 C8 1.5 9 1 10 1 H15 C16 1 17 1.5 17 3 V5" fill="none" stroke="#2aa0e8" stroke-width="1.6"/>
<rect x="1" y="5" width="23" height="20" rx="2.5" fill="#1a4f8a"/>
<rect x="8" y="10" width="4" height="4" fill="#f25022"/><rect x="13" y="10" width="4" height="4" fill="#7fba00"/><rect x="8" y="15" width="4" height="4" fill="#00a4ef"/><rect x="13" y="15" width="4" height="4" fill="#ffb900"/>
</svg>
<div class="a" style="left:944px;top:855px;width:38px;height:40px;border-radius:5px;background:rgba(255,255,255,0.55)"></div>
<div class="a" style="left:951px;top:862px;width:25px;height:25px;border-radius:50%;background:radial-gradient(circle at 50% 40%,#2f7bf0,#0b5cd8)"></div>
<div class="a" style="left:951px;top:871px;width:25px;text-align:center;font-size:7px;color:#fff;line-height:8px">zoom</div>
<div class="a" style="left:955px;top:892px;width:17px;height:3px;border-radius:2px;background:#2a7e88"></div>
<svg class="a" style="left:996px;top:862px" width="27" height="27" viewBox="0 0 27 27">
<circle cx="13.5" cy="13.5" r="12.5" fill="#db4437"/>
<path d="M13.5 13.5 L24.3 7.25 A12.5 12.5 0 0 1 7.25 24.3 Z" fill="#f4c20d"/>
<path d="M13.5 13.5 L7.25 24.3 A12.5 12.5 0 0 1 2.7 7.25 Z" fill="#0f9d58"/>
<circle cx="13.5" cy="13.5" r="6" fill="#fff"/><circle cx="13.5" cy="13.5" r="4.6" fill="#4285f4"/>
</svg>
<div class="a" style="left:1011px;top:861px;width:11px;height:11px;border-radius:50%;background:#b8b8b0;opacity:.8"></div>
<svg class="a" style="left:1043px;top:863px" width="26" height="26" viewBox="0 0 26 26">
<path d="M13 1.5 C20 1.5 24 5 24 11.5 C24 18 20 21 13 21 L8.5 24.5 V20.5 C4 19 2 16 2 11.5 C2 5 6 1.5 13 1.5 Z" fill="#7d56c8"/>
<path d="M8.5 7 C9.5 6 10.5 6.5 11 7.5 L12 9.5 C12.3 10.2 11.8 10.8 11.3 11.2 C12 13 13.2 14.2 15 15 C15.4 14.5 16 14 16.7 14.3 L18.7 15.3 C19.7 15.8 20 16.8 19 17.8 C17.5 19.3 15 18.8 12.5 16.8 C9.5 14.3 7 10 8.5 7 Z" fill="#fff"/>
</svg>
<div class="a" style="left:1056px;top:857px;width:17px;height:17px;border-radius:50%;background:#e83a3a;color:#fff;font-size:11px;line-height:17px;text-align:center">1</div>
<div class="a" style="left:1051px;top:892px;width:7px;height:3px;border-radius:2px;background:#7a8088"></div>
<svg class="a" style="left:1087px;top:862px" width="27" height="27" viewBox="0 0 27 27">
<circle cx="13.5" cy="13.5" r="12.5" fill="#db4437"/>
<path d="M13.5 13.5 L24.3 7.25 A12.5 12.5 0 0 1 7.25 24.3 Z" fill="#f4c20d"/>
<path d="M13.5 13.5 L7.25 24.3 A12.5 12.5 0 0 1 2.7 7.25 Z" fill="#0f9d58"/>
<circle cx="13.5" cy="13.5" r="6" fill="#fff"/><circle cx="13.5" cy="13.5" r="4.6" fill="#4285f4"/>
</svg>
<div class="a" style="left:1103px;top:857px;width:17px;height:17px;border-radius:50%;background:#8c8c8c;color:#eee;font-size:10px;line-height:17px;text-align:center">E</div>
<div class="a" style="left:1097px;top:892px;width:7px;height:3px;border-radius:2px;background:#7a8088"></div>
<svg class="a" style="left:1134px;top:863px" width="26" height="25" viewBox="0 0 26 25">
<rect x="1" y="1" width="23" height="23" fill="#dfe8f4" stroke="#9ab0d0" stroke-width="1"/>
<text x="2" y="18" font-family="Liberation Sans" font-weight="bold" font-size="17" fill="#1f4fa8">W</text>
<path d="M17 16 L25 20 L21 24 L15 22 Z" fill="#fff" stroke="#c8c8c8" stroke-width=".6"/>
</svg>
<div class="a" style="left:1143px;top:892px;width:7px;height:3px;border-radius:2px;background:#7a8088"></div>
<svg class="a" style="left:1290px;top:862px" width="200" height="28" fill="none" stroke="#222" stroke-width="1.5">
<path d="M7 16 L12.5 10.5 L18 16" stroke-width="1.7"/>
<rect x="42.5" y="4.5" width="6" height="11" rx="3"/><path d="M40 11 C40 15 42.5 17.5 45.5 17.5 C48.5 17.5 51 15 51 11 M45.5 17.5 V21"/>
<path d="M118 9.5 C122.5 5.5 129 5.5 133.5 9.5 M120.5 12.5 C123.5 10 128 10 131 12.5 M123 15.5 C124.5 14.2 127 14.2 128.5 15.5" stroke-width="1.7"/><circle cx="125.8" cy="18" r="1.5" fill="#222" stroke="none"/>
<path d="M143 10 H146 L150 6.5 V19.5 L146 16 H143 Z"/><path d="M152.5 9.5 C154 11.5 154 14.5 152.5 16.5 M154.5 7.5 C157 10.5 157 15.5 154.5 18.5" stroke-width="1.3"/>
<rect x="167.5" y="8.5" width="15" height="9.5" rx="1.5" fill="#222"/><path d="M183.5 11.5 V15" stroke-width="2"/><path d="M170 6.5 L172.5 2.5 L171 6.5 L174 6 L171 10" stroke-width="1.2" fill="none" stroke="#222"/>
</svg>
<div class="a" style="left:1364px;top:867px;font-size:13px;color:#222;line-height:16px;transform:scaleX(0.78);transform-origin:0 0">РУС</div>
<div class="a" style="left:1490px;top:859.5px;width:61px;text-align:right;font-size:12.4px;color:#222;line-height:15px">11:00</div>
<div class="a" style="left:1480px;top:875px;width:71px;text-align:right;font-size:12.2px;color:#222;line-height:15px">25.11.2025</div>
<div class="a" style="left:1563px;top:867px;width:16px;height:16px;border-radius:50%;background:#1f6e7a;color:#fff;font-size:10px;line-height:16px;text-align:center">1</div>
<!--/TASK-->
</body></html>
